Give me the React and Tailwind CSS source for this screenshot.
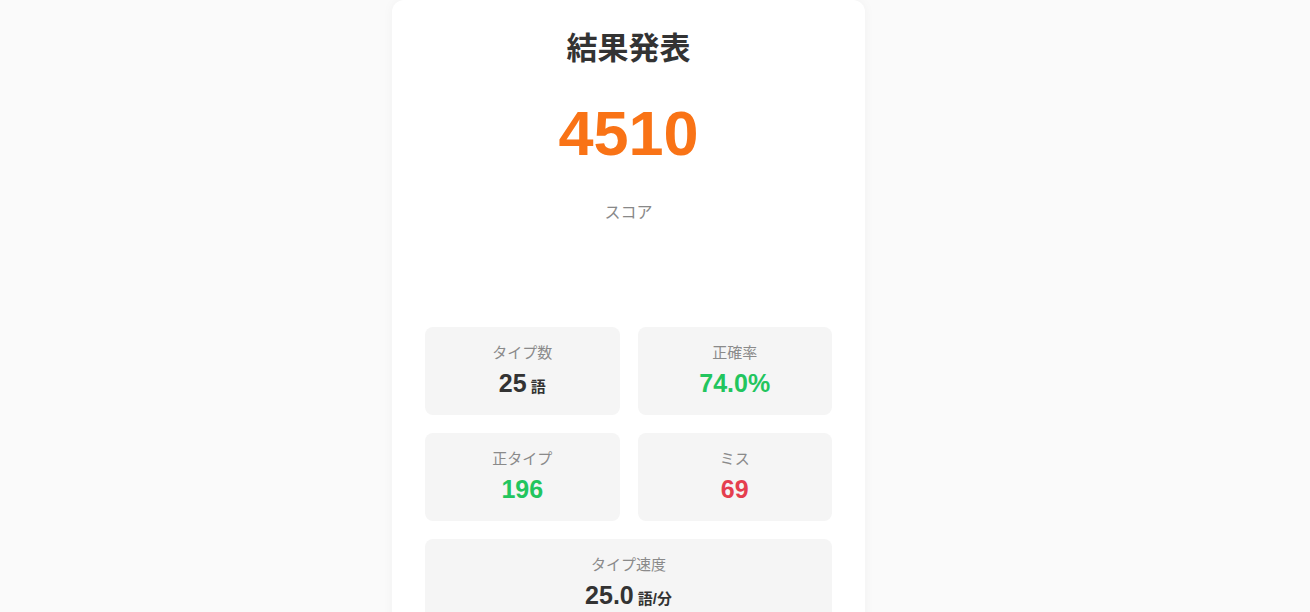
import React from "react";

const stats = [
  { label: "タイプ数", value: "25", unit: "語", color: "text-[#333333]" },
  { label: "正確率", value: "74.0%", color: "text-[#22c55e]" },
  { label: "正タイプ", value: "196", color: "text-[#22c55e]" },
  { label: "ミス", value: "69", color: "text-[#e53e4e]" },
];

const StatBox = ({ label, value, unit, color, wide }) => (
  <div className={`bg-[#f5f5f5] rounded-lg h-[88px] flex flex-col items-center pt-[16px] ${wide ? "col-span-2" : ""}`}>
    <p className="text-[15px] leading-5 text-[#8a8a8a]">{label}</p>
    <p className={`mt-[6px] text-[25px] leading-7 font-bold ${color}`}>
      {value}
      {unit && <span className="text-[15px] ml-1">{unit}</span>}
    </p>
  </div>
);

const App = () => {
  return (
    <div
      className="min-h-[612px] h-[612px] overflow-hidden bg-[#fafafa]"
      style={{ fontFamily: '"Liberation Sans", "Noto Sans CJK JP", sans-serif' }}
    >
      <div className="ml-[392px] w-[473px] bg-white rounded-t-xl shadow-[0_0_12px_rgba(0,0,0,0.04)] px-[33px] pt-[31px] min-h-[612px]">
        <h1 className="text-center text-[31px] leading-9 font-bold text-[#333333]">結果発表</h1>
        <p className="text-center text-[63px] leading-[72px] font-bold text-[#f97316] mt-[30px]">4510</p>
        <p className="text-center text-[16px] leading-6 text-[#888888] mt-[32px]">スコア</p>
        <div className="grid grid-cols-2 gap-x-[18px] gap-y-[18px] mt-[102px]">
          {stats.map((s) => (
            <StatBox key={s.label} {...s} />
          ))}
          <StatBox label="タイプ速度" value="25.0" unit="語/分" color="text-[#333333]" wide />
        </div>
      </div>
    </div>
  );
};

export default App;
